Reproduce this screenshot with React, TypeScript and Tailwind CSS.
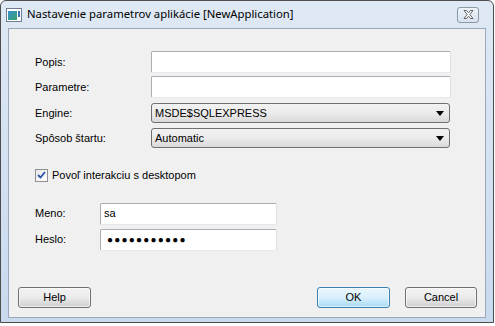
import type { ReactNode } from 'react';

const ui = { fontFamily: '"Liberation Sans", Arial, sans-serif' };
const title = { fontFamily: '"Noto Sans", "Open Sans", sans-serif' };

function TextBox({ value, width, password }: { value?: string; width: string; password?: boolean }) {
    return (
        <div className={`${width} h-[22px] bg-white border border-[#abadb3] border-b-[#e3e9ef] border-r-[#dbdfe6] rounded-[2px] flex items-center px-[3px] text-[11px] text-black`}>
            {password ? <span className="pl-[3px] tracking-[1.2px] text-[10px] leading-none">●●●●●●●●●●●</span> : value}
        </div>
    );
}

function ComboBox({ value }: { value: string }) {
    return (
        <div className="w-[299px] h-[20px] border border-[#707070] rounded-[3px] bg-gradient-to-b from-[#f2f2f2] via-[#ebebeb] to-[#d9d9d9] flex items-center justify-between pl-[3px] pr-[5px] text-[11px] text-black">
            <span>{value}</span>
            <svg width="8" height="5" viewBox="0 0 8 5"><path d="M0 0 H8 L4 5 Z" fill="#000" /></svg>
        </div>
    );
}

function Button({ label, primary }: { label: string; primary?: boolean }) {
    const look = primary
        ? 'border-[#3c7fb1] from-[#eaf6fd] via-[#d9f0fc] to-[#a7d9f5]'
        : 'border-[#707070] from-[#f2f2f2] via-[#ebebeb] to-[#cfcfcf]';
    return (
        <div className={`h-[21px] border rounded-[3px] bg-gradient-to-b ${look} flex items-center justify-center text-[11px] text-black shadow-[inset_0_0_0_1px_rgba(255,255,255,0.6)]`}>
            {label}
        </div>
    );
}

function Row({ label, children }: { label: string; children: ReactNode }) {
    return (
        <div className="flex items-center">
            <div className="w-[116px] text-[11px] text-black">{label}</div>
            {children}
        </div>
    );
}

export default function App() {
    return (
        <div className="w-[495px] h-[326px] bg-white" style={ui}>
            <div className="w-[494px] h-[323px] border border-[#4d4d4d] rounded-t-[6px] bg-gradient-to-b from-[#dfe9f5] to-[#c9d9ee] flex flex-col">
                {/* title bar */}
                <div className="h-[27px] flex items-center px-[5px] shrink-0">
                    <div className="w-[16px] h-[14px] border border-[#6d7d8f] bg-white relative mr-[5px]">
                        <div className="absolute left-[1px] top-[2px] w-[9px] h-[9px] bg-gradient-to-br from-[#3a8fd0] to-[#3aa060]" />
                        <div className="absolute right-[1px] top-[2px] w-[2px] h-[6px] bg-[#3a6fb0]" />
                    </div>
                    <span className="text-[11.3px] text-black" style={title}>Nastavenie parametrov aplikácie [NewApplication]</span>
                    <div className="ml-auto mr-[9px] w-[22px] h-[16px] border border-[#8a98a8] rounded-[3px] bg-gradient-to-b from-[#eef3f9] to-[#d7e2ef] flex items-center justify-center">
                        <svg width="11" height="9" viewBox="0 0 11 9">
                            <path d="M1 0.5 H3.5 L5.5 2.8 L7.5 0.5 H10 L6.8 4.5 L10 8.5 H7.5 L5.5 6.2 L3.5 8.5 H1 L4.2 4.5 Z" fill="#fff" stroke="#555" strokeWidth="0.9" />
                        </svg>
                    </div>
                </div>
                {/* client area */}
                <div className="mx-[7px] mb-[4px] flex-1 bg-[#f0f0f0] border border-[#99a8bb] flex flex-col px-[26px] pt-[22px]">
                    <div className="flex flex-col">
                        <Row label="Popis:"><TextBox width="w-[300px]" /></Row>
                        <div className="mt-[3px]"><Row label="Parametre:"><TextBox width="w-[300px]" /></Row></div>
                        <div className="mt-[5px]"><Row label="Engine:"><ComboBox value="MSDE$SQLEXPRESS" /></Row></div>
                        <div className="mt-[5px]"><Row label="Spôsob štartu:"><ComboBox value="Automatic" /></Row></div>
                    </div>
                    <div className="mt-[19px] flex items-center gap-[4px] text-[11px] text-black">
                        <div className="w-[13px] h-[13px] border border-[#8f8f8f] bg-gradient-to-br from-[#e8e8e8] to-[#ffffff] flex items-center justify-center">
                            <svg width="9" height="8" viewBox="0 0 9 8"><path d="M1 4 L3.5 6.5 L8 1" fill="none" stroke="#2a4fa8" strokeWidth="1.8" /></svg>
                        </div>
                        <span>Povoľ interakciu s desktopom</span>
                    </div>
                    <div className="mt-[19px] flex flex-col gap-[4px]">
                        <div className="flex items-center">
                            <div className="w-[65px] text-[11px] text-black">Meno:</div>
                            <TextBox width="w-[177px]" value="sa" />
                        </div>
                        <div className="flex items-center">
                            <div className="w-[65px] text-[11px] text-black">Heslo:</div>
                            <TextBox width="w-[177px]" password />
                        </div>
                    </div>
                    <div className="mt-auto mb-[9px] -ml-[17px] -mr-[18px] flex items-center">
                        <div className="w-[73px]"><Button label="Help" /></div>
                        <div className="ml-auto w-[73px]"><Button label="OK" primary /></div>
                        <div className="ml-[15px] w-[72px]"><Button label="Cancel" /></div>
                    </div>
                </div>
            </div>
        </div>
    );
}
